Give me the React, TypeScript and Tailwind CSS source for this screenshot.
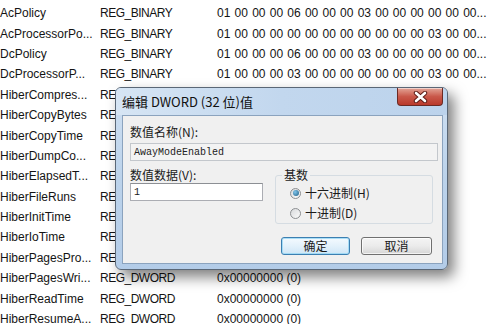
const font = { fontFamily: "'Liberation Sans', Arial, 'Noto Sans CJK SC', sans-serif" };
const cjk = { fontFamily: "'Noto Sans CJK SC', 'Liberation Sans', sans-serif" };
const mono = { fontFamily: "'Liberation Mono', 'Courier New', monospace" };

const rows: [string, string, string][] = [
  ['AcPolicy', 'REG_BINARY', '01 00 00 00 06 00 00 00 03 00 00 00 00 00 00...'],
  ['AcProcessorPo...', 'REG_BINARY', '01 00 00 00 00 00 00 00 00 00 00 00 03 00 00...'],
  ['DcPolicy', 'REG_BINARY', '01 00 00 00 06 00 00 00 03 00 00 00 00 00 00...'],
  ['DcProcessorP...', 'REG_BINARY', '01 00 00 00 03 00 00 00 00 00 00 00 03 00 00...'],
  ['HiberCompres...', 'REG_DWORD', '0x00000000 (0)'],
  ['HiberCopyBytes', 'REG_DWORD', '0x00000000 (0)'],
  ['HiberCopyTime', 'REG_DWORD', '0x00000000 (0)'],
  ['HiberDumpCo...', 'REG_DWORD', '0x00000000 (0)'],
  ['HiberElapsedT...', 'REG_DWORD', '0x00000000 (0)'],
  ['HiberFileRuns', 'REG_DWORD', '0x00000000 (0)'],
  ['HiberInitTime', 'REG_DWORD', '0x00000000 (0)'],
  ['HiberIoTime', 'REG_DWORD', '0x00000000 (0)'],
  ['HiberPagesPro...', 'REG_DWORD', '0x00000000 (0)'],
  ['HiberPagesWri...', 'REG_DWORD', '0x00000000 (0)'],
  ['HiberReadTime', 'REG_DWORD', '0x00000000 (0)'],
  ['HiberResumeA...', 'REG_DWORD', '0x00000000 (0)'],
];

function Radio({ checked, label }: { checked?: boolean; label: string }) {
  return (
    <div className="h-[20px] flex items-center gap-[4px]">
      <span className="w-[11px] h-[11px] rounded-full border border-[#8c8f92] bg-gradient-to-br from-[#d8dadc] to-[#fbfbfb] flex items-center justify-center">
        {checked && (
          <span className="w-[6px] h-[6px] rounded-full bg-[radial-gradient(circle_at_35%_35%,#7fc4ea,#1f5f86)]" />
        )}
      </span>
      <span className="text-[12px] leading-[16px] text-[#1a1a1a]">{label}</span>
    </div>
  );
}

function Dialog() {
  return (
    <div className="absolute left-[115px] top-[87px] w-[333px] h-[183px] rounded-[6px] border border-[#5a6776] bg-gradient-to-b from-[#cfe0f2] via-[#bcd3eb] to-[#b3cce8] shadow-[6px_7px_14px_rgba(0,0,0,0.5)] flex flex-col">
      <div className="h-[27px] relative flex items-center pl-[6px] rounded-t-[5px] bg-gradient-to-r from-[#d6e5f4] via-[#c2d7ee] to-[#bcd3ec]">
        <span className="text-[13px] text-[#111]" style={cjk}>编辑 DWORD (32 位)值</span>
        <div className="absolute top-0 right-[4px] w-[46px] h-[18px] rounded-b-[4px] border border-t-0 border-[#6b2a24] bg-gradient-to-b from-[#e2a497] via-[#c9584a] to-[#b9392b] flex items-center justify-center shadow-[inset_0_1px_0_rgba(255,255,255,0.5)]">
          <svg width="15" height="12" viewBox="0 0 15 12">
            <path d="M3 2 L12 10 M12 2 L3 10" stroke="#5a1a14" strokeWidth="4.4" strokeLinecap="round" />
            <path d="M3 2 L12 10 M12 2 L3 10" stroke="#ffffff" strokeWidth="2.6" strokeLinecap="round" />
          </svg>
        </div>
      </div>
      <div className="ml-[6px] mr-[4px] mb-[5px] flex-1 border border-[#8ba3be] bg-[#f0f0f0] pl-[7px] pt-[8px] text-[#1a1a1a]" style={cjk}>
        <div className="h-[16px] leading-[16px] text-[12px]">数值名称(N):</div>
        <div className="mt-[3px] w-[308px] h-[18px] border border-[#c3c7cc] bg-[#f3f3f3] flex items-center pl-[3px] text-[10px] text-[#222]" style={mono}>
          AwayModeEnabled
        </div>
        <div className="mt-[6px] flex">
          <div className="w-[133px] flex flex-col">
            <div className="h-[16px] leading-[16px] text-[12px]">数值数据(V):</div>
            <div className="h-[18px] border border-[#abadb3] border-t-[#8c8f94] bg-white flex items-center pl-[3px] text-[10px]" style={mono}>
              1
            </div>
          </div>
          <fieldset className="ml-[12px] w-[158px] h-[57px] border border-[#d5dce2] rounded-[3px] pl-[14px]">
            <legend className="text-[12px] leading-[16px] px-[2px] -ml-[8px]">基数</legend>
            <Radio checked label="十六进制(H)" />
            <Radio label="十进制(D)" />
          </fieldset>
        </div>
        <div className="mt-[13px] ml-[151px] flex gap-[11px] text-[12px]">
          <div className="w-[69px] h-[18px] rounded-[3px] border border-[#3c7fb1] bg-gradient-to-b from-[#f4fafe] via-[#e3f1fb] to-[#cfe6f6] shadow-[inset_0_0_0_1px_rgba(150,215,245,0.8)] flex items-center justify-center leading-none">
            确定
          </div>
          <div className="w-[71px] h-[18px] rounded-[3px] border border-[#707070] bg-gradient-to-b from-[#f4f4f4] via-[#ebebeb] to-[#d6d6d6] shadow-[inset_0_0_0_1px_rgba(255,255,255,0.7)] flex items-center justify-center leading-none">
            取消
          </div>
        </div>
      </div>
    </div>
  );
}

export default function App() {
  return (
    <div className="relative w-[500px] h-[324px] bg-white overflow-hidden text-[#141414]" style={font}>
      <div className="pt-[3px] flex flex-col">
        {rows.map(([name, type, data]) => (
          <div key={name} className="h-[20.4px] flex items-center text-[12px] whitespace-nowrap">
            <span className="w-[100px]">{name}</span>
            <span className="w-[117px] tracking-[-0.5px]">{type}</span>
            <span className={type === 'REG_BINARY' ? '[word-spacing:0.9px]' : ''}>{data}</span>
          </div>
        ))}
      </div>
      <Dialog />
    </div>
  );
}
